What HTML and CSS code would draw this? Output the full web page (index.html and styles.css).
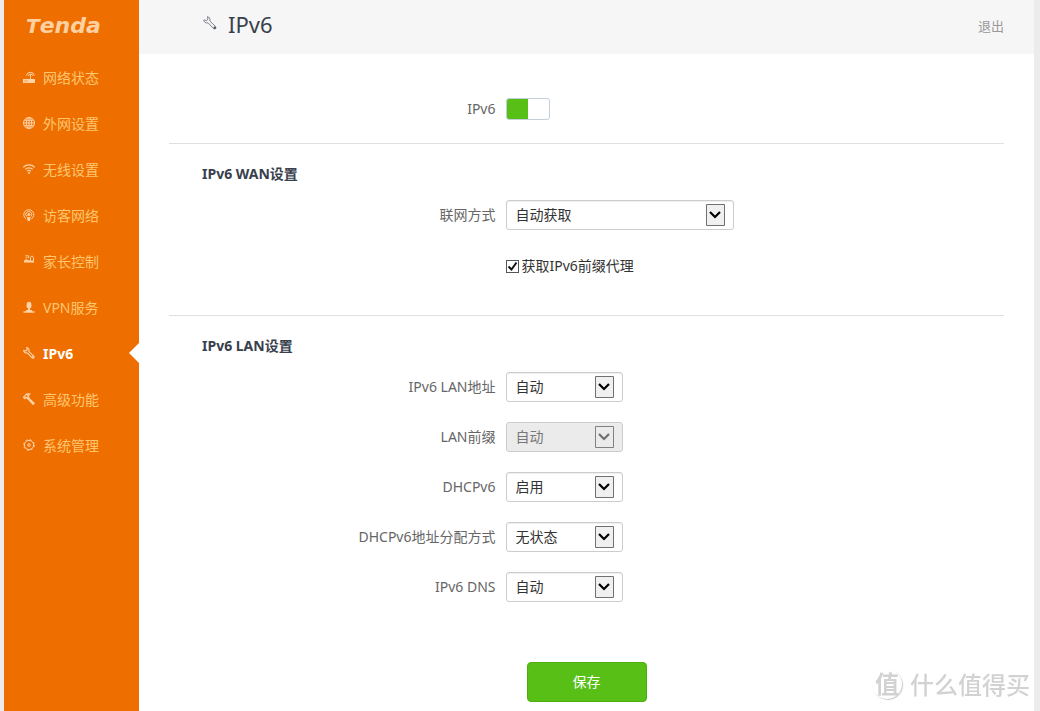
FILE: index.html
```html
<!DOCTYPE html>
<html lang="zh-CN">
<head>
<meta charset="utf-8">
<title>IPv6</title>
<link rel="stylesheet" href="styles.css">
</head>
<body>
<div class="app">
  <aside class="sidebar">
    <div class="logo"><span class="logo-cap">T</span>enda</div>
    <nav class="nav">
      <a class="nav-item" href="#status">
        <svg class="icon" viewBox="0 0 12 12"><path class="solid" d="M0 8h12v4H0z"/><path d="M7.500 8V3.500M3.200 4.500a4.300 4.300 0 0 1 8.300 0M5 5a2.600 2.600 0 0 1 5 0"/><path class="cut" d="M1.500 10h1M3.500 10h1"/></svg>
        <span>网络状态</span></a>
      <a class="nav-item" href="#wan">
        <svg class="icon" viewBox="0 0 12 12"><circle cx="6" cy="6" r="5.500"/><ellipse cx="6" cy="6" rx="2.700" ry="5.500"/><path d="M6 .5v11M.5 6h11M1.300 3.300h9.400M1.300 8.700h9.400"/></svg>
        <span>外网设置</span></a>
      <a class="nav-item" href="#wireless">
        <svg class="icon" viewBox="0 0 12 12"><path class="thick" d="M.4 4.300a7.900 7.900 0 0 1 11.200 0M2.300 6.400a5.300 5.300 0 0 1 7.400 0M4.200 8.300a2.600 2.600 0 0 1 3.600 0"/><circle class="solid" cx="6" cy="10" r="1"/></svg>
        <span>无线设置</span></a>
      <a class="nav-item" href="#guest">
        <svg class="icon" viewBox="0 0 12 12"><path d="M3.300 10a5 5 0 1 1 5 0M3.600 7.500a3 3 0 1 1 4.400 0"/><circle class="solid" cx="5.800" cy="5.500" r="1.500"/><path class="solid" d="M4 8h3.600l-.6 4H4.600z"/></svg>
        <span>访客网络</span></a>
      <a class="nav-item" href="#parental">
        <svg class="icon" viewBox="0 0 12 12"><path class="solid" d="M1 7.500V5.500l2-1.200 2 .7 2 .5h4v2z"/><path d="M2.300.8h3.400v2.400M2.500 2.800h1.800M7.500 5.500V2.500L9 .8l1.500 1.700v3"/></svg>
        <span>家长控制</span></a>
      <a class="nav-item" href="#vpn">
        <svg class="icon" viewBox="0 0 12 12"><path class="solid" d="M3.600 3.500a2.400 2.800 0 0 1 4.800 0V6L7 7.800V9H5V7.800L3.600 6z"/><path class="thick" d="M.5 11h11M6 7v4M3 9.700h6"/></svg>
        <span>VPN服务</span></a>
      <a class="nav-item active" href="#ipv6" aria-current="page">
        <svg class="icon" viewBox="0 0 14 14"><path class="thick" d="M4.400.7 5 3.200 3.500 4.600.9 3.900C.7 6 2.800 7.500 5 6.800l5.500 5.700c1.700 1.300 3.300-.3 2-2L6.800 5C7.600 2.700 6.300.8 4.400.7z"/><circle class="solid" cx="11.500" cy="11.500" r="1"/></svg>
        <span>IPv6</span><i class="notch"></i></a>
      <a class="nav-item" href="#advanced">
        <svg class="icon" viewBox="0 0 12 12"><path class="thick" d="M.6 4.300 3.800.9 6.500 1 4.800 2.700l1 1.200L4.400 5.300l-1.200-1L2 5.600zM5.500 5l5.600 5.200-1 1.100L4.700 5.500"/></svg>
        <span>高级功能</span></a>
      <a class="nav-item" href="#system">
        <svg class="icon" viewBox="0 0 12 12"><circle cx="6" cy="6" r="4.600"/><circle class="teeth" cx="6" cy="6" r="5.300"/><circle cx="6" cy="6" r="1.300"/></svg>
        <span>系统管理</span></a>
    </nav>
  </aside>

  <div class="page">
    <header class="header">
      <svg class="icon title-icon" viewBox="0 0 14 14"><path d="M4.400.7 5 3.200 3.500 4.600.9 3.900C.7 6 2.800 7.500 5 6.800l5.500 5.700c1.700 1.300 3.300-.3 2-2L6.800 5C7.600 2.700 6.300.8 4.400.7z"/><circle class="solid" cx="11.700" cy="11.700" r="1.200"/></svg>
      <h1 class="title">IPv6</h1>
      <a class="logout" href="#logout">退出</a>
    </header>

    <form class="content">
      <section class="section switch-section">
        <div class="row switch-row">
          <label for="enable">IPv6</label>
          <input class="switch" type="checkbox" id="enable" checked>
        </div>
      </section>

      <section class="section wan-section">
        <h2 class="heading">IPv6 WAN设置</h2>
        <div class="row">
          <label for="mode">联网方式</label>
          <select class="select wide" id="mode"><option>自动获取</option></select>
        </div>
        <div class="row check-row">
          <div class="check">
            <input class="checkbox" type="checkbox" id="prefix-proxy" checked>
            <label class="check-label" for="prefix-proxy">获取IPv6前缀代理</label>
          </div>
        </div>
      </section>

      <section class="section lan-section">
        <h2 class="heading">IPv6 LAN设置</h2>
        <div class="row">
          <label for="lan-address">IPv6 LAN地址</label>
          <select class="select" id="lan-address"><option>自动</option></select>
        </div>
        <div class="row">
          <label for="lan-prefix">LAN前缀</label>
          <select class="select" id="lan-prefix" disabled><option>自动</option></select>
        </div>
        <div class="row">
          <label for="dhcp">DHCPv6</label>
          <select class="select" id="dhcp"><option>启用</option></select>
        </div>
        <div class="row">
          <label for="assign">DHCPv6地址分配方式</label>
          <select class="select" id="assign"><option>无状态</option></select>
        </div>
        <div class="row">
          <label for="dns">IPv6 DNS</label>
          <select class="select" id="dns"><option>自动</option></select>
        </div>
      </section>

      <button class="save" type="button">保存</button>
    </form>
  </div>
</div>

<div class="watermark"><span class="badge">值</span><span>什么值得买</span></div>
</body>
</html>
```

FILE: styles.css
```css
* {
  box-sizing: border-box;
}

body {
  margin: 0;
  background: #ececee;
  color: #333;
  font: 14px/20px "Noto Sans", "Noto Sans CJK SC", sans-serif;
}

.app {
  display: flex;
  min-height: 100vh;
  padding: 0 6px 0 4px;
}

/* Sidebar */
.sidebar {
  flex: none;
  width: 135px;
  background: #ee6f00;
}

.logo {
  height: 54px;
  padding-left: 22px;
  color: #ffd0a0;
  font: italic bold 22px/51px "DejaVu Sans", sans-serif;
}

.logo-cap {
  font-size: 20px;
}

.nav-item {
  display: flex;
  align-items: center;
  gap: 8px;
  height: 46px;
  padding-left: 19px;
  color: #ffc670;
  text-decoration: none;
}

.nav-item span {
  padding-top: 1px;
}

.active {
  color: #fff;
  font-weight: bold;
}

.notch {
  width: 10px;
  height: 20px;
  margin-left: auto;
  background: #fff;
  clip-path: polygon(100% 0, 100% 100%, 0 50%);
}

.icon {
  flex: none;
  width: 12px;
  height: 12px;
  fill: none;
  stroke: #ffd3a8;
  stroke-width: 1;
}

.icon .solid {
  fill: #ffd3a8;
  stroke: none;
}

.icon .thick {
  stroke-width: 1.3;
}

.icon .cut {
  stroke: #ee6f00;
}

.icon .teeth {
  stroke-dasharray: 2 2.16;
}

/* Header */
.page {
  flex: 1;
  min-width: 0;
  background: #fff;
}

.header {
  display: flex;
  align-items: center;
  height: 54px;
  padding: 0 30px 6px 64px;
  background: #f6f6f6;
}

.header .title-icon {
  width: 14px;
  height: 14px;
  margin-bottom: 3px;
  stroke: #7b828b;
}

.header .title-icon .solid {
  fill: #4a525e;
}

.title {
  margin: 0 auto 0 11px;
  color: #38404d;
  font-size: 22px;
  font-weight: normal;
  line-height: 30px;
}

.logout {
  padding-top: 4px;
  color: #999;
  font-size: 13px;
  text-decoration: none;
}

/* Form */
.content {
  padding: 0 30px 9px;
}

.section {
  display: grid;
  gap: 20px;
}

.switch-section {
  padding: 44px 0 23px;
  border-bottom: 1px solid #dce0e3;
}

.wan-section {
  padding: 20px 0 33px;
  border-bottom: 1px solid #dce0e3;
}

.lan-section {
  padding: 20px 0 60px;
}

.heading {
  margin: 0 0 -4px 33px;
  color: #38404d;
  font-size: 14px;
  line-height: 20px;
}

.row {
  display: grid;
  grid-template-columns: calc(50% - 91px) auto;
  column-gap: 10px;
  align-items: center;
  justify-content: start;
  min-height: 30px;
  color: #666;
}

.row > label {
  text-align: right;
}

.switch-row {
  min-height: 22px;
}

.check-row {
  min-height: 32px;
}

.check {
  display: flex;
  grid-column: 2;
  align-items: center;
  gap: 3px;
  color: #333;
}

.switch {
  appearance: none;
  width: 44px;
  height: 22px;
  margin: 0;
  border: 1px solid #c3ced9;
  border-radius: 3px;
  background: #fff;
}

.switch:checked {
  background: linear-gradient(90deg, #58bf16 21px, #fff 21px);
}

.select {
  appearance: none;
  width: 117px;
  height: 30px;
  padding: 0 36px 0 9px;
  border: 1px solid #ccc;
  border-radius: 3px;
  background: #fff url("data:image/svg+xml,%3Csvg xmlns='http://www.w3.org/2000/svg' width='19' height='22'%3E%3Cpath d='M.5.5h18v21H.5z' fill='%23f0f0f0' stroke='%23707070'/%3E%3Cpath d='M4 8l5 5 5-5' fill='none' stroke='%23000' stroke-width='2.200'/%3E%3C/svg%3E") no-repeat right 8px center;
  box-shadow: inset 0 1px 1px #eee;
  color: #333;
  font: inherit;
}

.wide {
  width: 228px;
}

.select:disabled {
  background-color: #ebebeb;
  background-image: url("data:image/svg+xml,%3Csvg xmlns='http://www.w3.org/2000/svg' width='19' height='22'%3E%3Cpath d='M.5.5h18v21H.5z' fill='%23ebebeb' stroke='%23808080'/%3E%3Cpath d='M4 8l5 5 5-5' fill='none' stroke='%23707070' stroke-width='2.200'/%3E%3C/svg%3E");
  color: #777;
  opacity: 1;
}

.checkbox {
  appearance: none;
  width: 13px;
  height: 13px;
  margin: 0;
  border: 1px solid #555;
  background: #fff;
}

.checkbox:checked {
  background: #fff url("data:image/svg+xml,%3Csvg xmlns='http://www.w3.org/2000/svg' width='11' height='11'%3E%3Cpath d='M1.500 5.500l3 3 5-7' fill='none' stroke='%23111' stroke-width='2'/%3E%3C/svg%3E") no-repeat center;
}

.save {
  display: block;
  width: 120px;
  height: 40px;
  margin: 0 auto;
  border: 1px solid #4cae10;
  border-radius: 4px;
  background: #58bf16;
  color: #fff;
  font: inherit;
}

/* Watermark laid over the page corner */
.watermark {
  position: fixed;
  right: 10px;
  bottom: 11px;
  display: flex;
  align-items: center;
  gap: 8px;
  color: #d2d2d2;
  font: 500 24px/32px "Noto Sans CJK SC", sans-serif;
  pointer-events: none;
}

.badge {
  width: 30px;
  height: 30px;
  border-radius: 50%;
  box-shadow: 1px 1px 1px #ccc;
  font-weight: bold;
  line-height: 28px;
  text-align: center;
}
```
